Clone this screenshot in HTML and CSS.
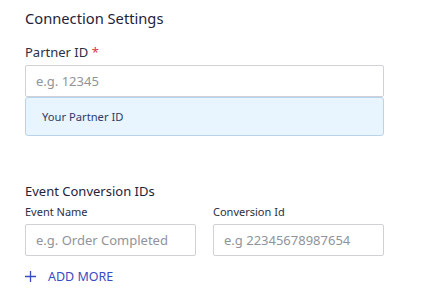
FILE: index.html
```html
<!DOCTYPE html>
<html lang="en">
<head>
    <meta charset="UTF-8">
    <title>Connection Settings</title>
    <link rel="stylesheet" href="styles.css">
</head>
<body>
    <div class="settings">
        <h2 class="section-title">Connection Settings</h2>
        <label class="field-label" for="partner-id">Partner ID <span class="required">*</span></label>
        <input id="partner-id" class="text-input" type="text" placeholder="e.g. 12345">
        <div class="hint-box">Your Partner ID</div>

        <h3 class="sub-title">Event Conversion IDs</h3>
        <div class="pair-row">
            <div class="pair-col">
                <label class="small-label" for="event-name">Event Name</label>
                <input id="event-name" class="text-input" type="text" placeholder="e.g. Order Completed">
            </div>
            <div class="pair-col">
                <label class="small-label" for="conversion-id">Conversion Id</label>
                <input id="conversion-id" class="text-input" type="text" placeholder="e.g 22345678987654">
            </div>
        </div>
        <a href="#" class="add-more">
            <svg width="11" height="11" viewBox="0 0 11 11"><path d="M5.5 0v11M0 5.5h11" stroke="#3a4bc4" stroke-width="1.3" fill="none"/></svg>
            <span>ADD MORE</span>
        </a>
    </div>
</body>
</html>
```

FILE: styles.css
```css
body {
    margin: 0;
    padding: 0;
    background-color: #fff;
    font-family: "Noto Sans", "Open Sans", sans-serif;
    color: #2b2f45;
}
.settings {
    width: 359px;
    padding: 8px 25px 0 25px;
    display: flex;
    flex-direction: column;
}
.section-title {
    margin: 0;
    font-size: 14.7px;
    font-weight: 400;
    line-height: 20px;
    color: #1f2338;
}
.field-label {
    margin-top: 15px;
    font-size: 13px;
    line-height: 18px;
}
.required {
    color: #e0334a;
}
.text-input {
    box-sizing: border-box;
    width: 100%;
    height: 32px;
    margin-top: 4px;
    padding: 0 10px;
    border: 1px solid #cfd1d6;
    border-radius: 2px;
    font-family: inherit;
    font-size: 13px;
    color: #2b2f45;
}
.text-input::placeholder {
    color: #90939b;
}
.hint-box {
    box-sizing: border-box;
    height: 39px;
    padding: 0 16px;
    display: flex;
    align-items: center;
    background-color: #e8f4fe;
    border: 1px solid #b8d3ec;
    border-radius: 3px;
    font-size: 11.2px;
    color: #2f3b66;
}
.sub-title {
    margin: 46px 0 0 0;
    font-size: 13px;
    font-weight: 400;
    line-height: 18px;
    color: #1f2338;
}
.pair-row {
    display: flex;
    gap: 17px;
    margin-top: 4px;
}
.pair-col {
    flex: 1;
    display: flex;
    flex-direction: column;
}
.small-label {
    font-size: 11px;
    line-height: 16px;
}
.pair-col .text-input {
    margin-top: 4px;
}
.add-more {
    display: flex;
    align-items: center;
    gap: 12px;
    margin-top: 12px;
    color: #3a4bc4;
    text-decoration: none;
    font-size: 12.5px;
}
```
